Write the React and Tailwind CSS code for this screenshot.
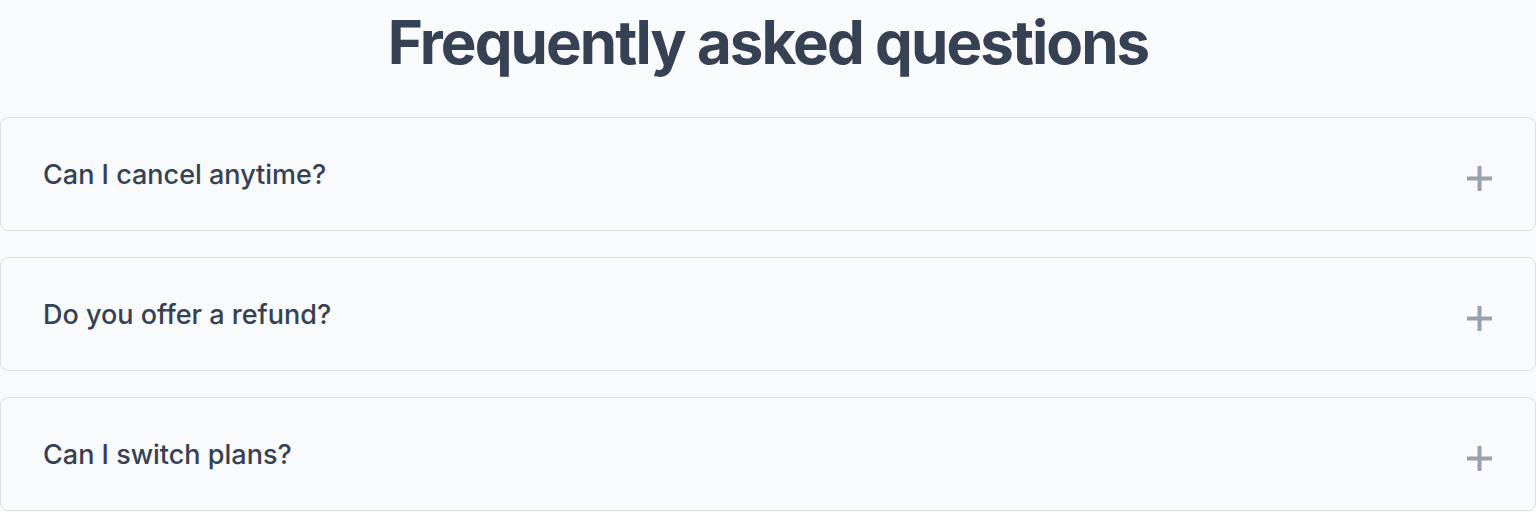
import React, { useState } from "react";

const faqs = [
  { q: "Can I cancel anytime?", a: "Yes. You can cancel your subscription at any time from your account settings." },
  { q: "Do you offer a refund?", a: "We offer a full refund within 30 days of purchase, no questions asked." },
  { q: "Can I switch plans?", a: "Absolutely. You can upgrade or downgrade your plan whenever you like." },
];

function PlusIcon() {
  return (
    <svg width="25" height="25" viewBox="0 0 25 25" className="mt-2 text-gray-400">
      <path d="M12.5 0v25M0 12.5h25" stroke="currentColor" strokeWidth="4" />
    </svg>
  );
}

export default function App() {
  const [open, setOpen] = useState(null);

  return (
    <div className="min-h-screen bg-gray-50 font-['Inter',sans-serif] text-gray-700">
      <h1 className="pt-[6px] text-center text-[60px] font-bold leading-[72px] tracking-[-0.032em] text-gray-700">
        Frequently asked questions
      </h1>
      <div className="mt-[39px] flex flex-col gap-[26px]">
        {faqs.map((f, i) => (
          <div key={f.q} className="rounded-lg border border-[#dfe1e5] bg-gray-50">
            <button
              type="button"
              onClick={() => setOpen(open === i ? null : i)}
              className="flex h-[112px] w-full items-center justify-between pl-[42px] pr-[43px] text-left"
            >
              <span className="mt-[3px] text-[27px] font-medium">{f.q}</span>
              <PlusIcon />
            </button>
            {open === i && <p className="px-[42px] pb-8 text-lg text-gray-500">{f.a}</p>}
          </div>
        ))}
      </div>
    </div>
  );
}
